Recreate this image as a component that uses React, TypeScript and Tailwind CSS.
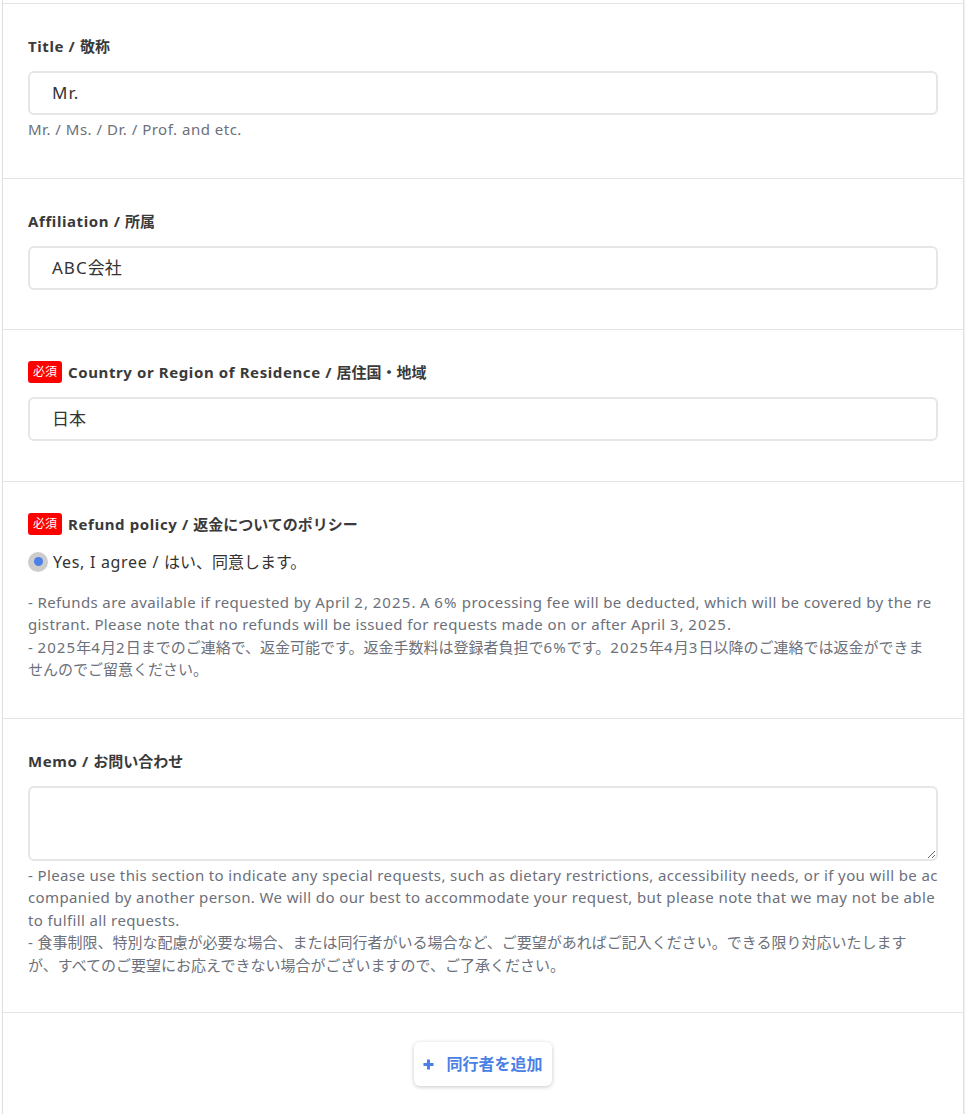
import React from "react";

const FONT = "font-['Noto_Sans','Noto_Sans_CJK_JP',sans-serif]";

const CJK = /([\u3000-\u30ff\u3400-\u9fff\uff00-\uffef]+)/;
const DIG = /([0-9%]+)/;

function T({ text, track = "tracking-[0.38px]", digitTrack }: { text: string; track?: string; digitTrack?: string }) {
  const parts = text.split(CJK).filter((p) => p.length > 0);
  const out: React.ReactNode[] = [];
  parts.forEach((p, i) => {
    if (CJK.test(p)) {
      out.push(<span key={i}>{p}</span>);
    } else if (digitTrack) {
      p.split(DIG)
        .filter((q) => q.length > 0)
        .forEach((q, j) => {
          out.push(
            <span key={i + "-" + j} className={DIG.test(q) ? digitTrack : track}>
              {q}
            </span>
          );
        });
    } else {
      out.push(
        <span key={i} className={track}>
          {p}
        </span>
      );
    }
  });
  return <>{out}</>;
}

function Label({ required, text }: { required?: boolean; text: string }) {
  return (
    <div className="flex items-center h-[22px]">
      {required && (
        <span className="mr-[6px] flex h-[22px] w-[34px] items-center justify-center rounded-[3px] bg-[#ff0000] text-[12px] leading-none text-white">
          必須
        </span>
      )}
      <span className="text-[15px] font-bold leading-[22px] text-[#3a3a3a]">
        <T text={text} track="tracking-[0.6px]" />
      </span>
    </div>
  );
}

function TextInput({ value }: { value: string }) {
  return (
    <div className="mt-[14px] flex h-[44px] items-center rounded-[6px] border-2 border-[#e6e6e6] bg-white pl-[22px] text-[17px] text-[#333]">
      <T text={value} track="tracking-[1px]" />
    </div>
  );
}

function Hint({ lines, className = "" }: { lines: string[]; className?: string }) {
  return (
    <div className={"text-[15px] leading-[22.5px] text-[#6c707a] " + className}>
      {lines.map((l, i) => (
        <div key={i} className="whitespace-nowrap">
          <T text={l} digitTrack="tracking-[1.1px]" />
        </div>
      ))}
    </div>
  );
}

function Section({ children, className = "" }: { children: React.ReactNode; className?: string }) {
  return <div className={"border-t border-[#e4e4e4] px-[25px] " + className}>{children}</div>;
}

export default function App() {
  return (
    <div className={"min-h-[1114px] w-[966px] bg-white pl-[2px] " + FONT}>
      <div className="w-[962px] border-x border-[#dedede] pt-[3px] min-h-[1114px] shadow-[1px_0_2px_rgba(0,0,0,0.06)]">
        <Section className="pt-[31px] pb-[37px]">
          <Label text="Title / 敬称" />
          <TextInput value="Mr." />
          <div className="mt-[3px] text-[15px] leading-[22.5px] text-[#6c707a]">
            <T text="Mr. / Ms. / Dr. / Prof. and etc." track="tracking-[0.5px]" />
          </div>
        </Section>

        <Section className="pt-[31px] pb-[39px]">
          <Label text="Affiliation / 所属" />
          <TextInput value="ABC会社" />
        </Section>

        <Section className="pt-[31px] pb-[40px]">
          <Label required text="Country or Region of Residence / 居住国・地域" />
          <TextInput value="日本" />
        </Section>

        <Section className="pt-[31px] pb-[37px]">
          <Label required text="Refund policy / 返金についてのポリシー" />
          <div className="mt-[15px] flex h-[24px] items-center">
            <span className="flex h-[20px] w-[20px] items-center justify-center rounded-full bg-[#cccccc]">
              <span className="h-[9px] w-[9px] rounded-full bg-[#4a80e8]" />
            </span>
            <span className="ml-[5px] text-[16px] leading-[24px] text-[#333]">
              <T text="Yes, I agree / はい、同意します。" track="tracking-[0.7px]" />
            </span>
          </div>
          <Hint
            className="mt-[17px]"
            lines={[
              "- Refunds are available if requested by April 2, 2025. A 6% processing fee will be deducted, which will be covered by the re",
              "gistrant. Please note that no refunds will be issued for requests made on or after April 3, 2025.",
              "- 2025年4月2日までのご連絡で、返金可能です。返金手数料は登録者負担で6%です。2025年4月3日以降のご連絡では返金ができま",
              "せんのでご留意ください。",
            ]}
          />
        </Section>

        <Section className="pt-[31px] pb-[36px]">
          <Label text="Memo / お問い合わせ" />
          <textarea
            readOnly
            className="mt-[14px] block h-[75px] w-full rounded-[6px] border-2 border-[#e6e6e6] bg-white outline-none"
          />
          <Hint
            className="mt-[3px]"
            lines={[
              "- Please use this section to indicate any special requests, such as dietary restrictions, accessibility needs, or if you will be ac",
              "companied by another person. We will do our best to accommodate your request, but please note that we may not be able",
              "to fulfill all requests.",
              "- 食事制限、特別な配慮が必要な場合、または同行者がいる場合など、ご要望があればご記入ください。できる限り対応いたします",
              "が、すべてのご要望にお応えできない場合がございますので、ご了承ください。",
            ]}
          />
        </Section>

        <Section className="flex justify-center pt-[29px] pb-[30px]">
          <button className="flex h-[44px] w-[138px] items-center justify-center gap-[12px] rounded-[6px] bg-white text-[16px] font-bold text-[#4a7fe6] shadow-[0_1px_4px_rgba(0,0,0,0.22)]">
            <svg width="11" height="11" viewBox="0 0 11 11">
              <path d="M5.5 0.5v10M0.5 5.5h10" stroke="#4a7fe6" strokeWidth="3" />
            </svg>
            <span>同行者を追加</span>
          </button>
        </Section>
      </div>
    </div>
  );
}
